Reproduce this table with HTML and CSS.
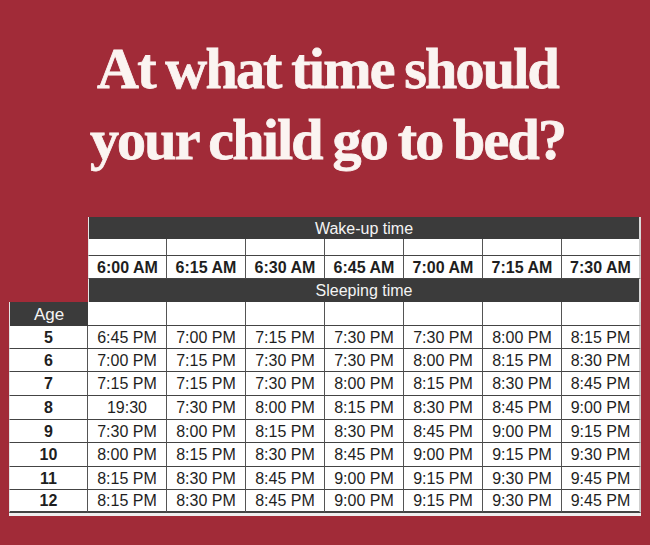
FILE: index.html
```html
<!DOCTYPE html>
<html lang="en">
<head>
<meta charset="utf-8">
<title>At what time should your child go to bed?</title>
<link rel="stylesheet" href="styles.css">
</head>
<body>
<div class="page">
  <h1 class="title">At what time should<br>your child go to bed?</h1>
  <div class="chart">
    <div class="void"></div>
    <div class="band first">Wake-up time</div>

    <div class="void"></div>
    <div class="cell first"></div><div class="cell"></div><div class="cell"></div><div class="cell"></div><div class="cell"></div><div class="cell"></div><div class="cell last"></div>

    <div class="void"></div>
    <div class="cell wake first">6:00 AM</div><div class="cell wake">6:15 AM</div><div class="cell wake">6:30 AM</div><div class="cell wake">6:45 AM</div><div class="cell wake">7:00 AM</div><div class="cell wake">7:15 AM</div><div class="cell wake last">7:30 AM</div>

    <div class="void"></div>
    <div class="band first">Sleeping time</div>

    <div class="agehead">Age</div>
    <div class="cell"></div><div class="cell"></div><div class="cell"></div><div class="cell"></div><div class="cell"></div><div class="cell"></div><div class="cell last"></div>

    <div class="age">5</div>
    <div class="cell">6:45 PM</div><div class="cell">7:00 PM</div><div class="cell">7:15 PM</div><div class="cell">7:30 PM</div><div class="cell">7:30 PM</div><div class="cell">8:00 PM</div><div class="cell last">8:15 PM</div>

    <div class="age">6</div>
    <div class="cell">7:00 PM</div><div class="cell">7:15 PM</div><div class="cell">7:30 PM</div><div class="cell">7:30 PM</div><div class="cell">8:00 PM</div><div class="cell">8:15 PM</div><div class="cell last">8:30 PM</div>

    <div class="age">7</div>
    <div class="cell">7:15 PM</div><div class="cell">7:15 PM</div><div class="cell">7:30 PM</div><div class="cell">8:00 PM</div><div class="cell">8:15 PM</div><div class="cell">8:30 PM</div><div class="cell last">8:45 PM</div>

    <div class="age">8</div>
    <div class="cell">19:30</div><div class="cell">7:30 PM</div><div class="cell">8:00 PM</div><div class="cell">8:15 PM</div><div class="cell">8:30 PM</div><div class="cell">8:45 PM</div><div class="cell last">9:00 PM</div>

    <div class="age">9</div>
    <div class="cell">7:30 PM</div><div class="cell">8:00 PM</div><div class="cell">8:15 PM</div><div class="cell">8:30 PM</div><div class="cell">8:45 PM</div><div class="cell">9:00 PM</div><div class="cell last">9:15 PM</div>

    <div class="age">10</div>
    <div class="cell">8:00 PM</div><div class="cell">8:15 PM</div><div class="cell">8:30 PM</div><div class="cell">8:45 PM</div><div class="cell">9:00 PM</div><div class="cell">9:15 PM</div><div class="cell last">9:30 PM</div>

    <div class="age">11</div>
    <div class="cell">8:15 PM</div><div class="cell">8:30 PM</div><div class="cell">8:45 PM</div><div class="cell">9:00 PM</div><div class="cell">9:15 PM</div><div class="cell">9:30 PM</div><div class="cell last">9:45 PM</div>

    <div class="age bottom">12</div>
    <div class="cell bottom">8:15 PM</div><div class="cell bottom">8:30 PM</div><div class="cell bottom">8:45 PM</div><div class="cell bottom">9:00 PM</div><div class="cell bottom">9:15 PM</div><div class="cell bottom">9:30 PM</div><div class="cell bottom last">9:45 PM</div>
  </div>
</div>
</body>
</html>
```

FILE: styles.css
```css
html, body {
  margin: 0;
  padding: 0;
  background: #a12b38;
}

.page {
  width: 650px;
  height: 545px;
  background: #a12b38;
  overflow: hidden;
}

.title {
  margin: 33px 0 0 0;
  padding-left: 5px;
  height: 184px;
  font-family: "Liberation Serif", "Times New Roman", serif;
  font-weight: 700;
  font-size: 58px;
  line-height: 71px;
  letter-spacing: -1.8px;
  word-spacing: -2px;
  color: #fbf4f1;
  -webkit-text-stroke: 0.8px #fbf4f1;
  text-align: center;
}

.chart {
  margin-left: 9px;
  display: grid;
  grid-template-columns: repeat(8, 79px);
  grid-template-rows: 22px 17px 23px 23px 24px 23px 23px 24px 24px 23px 24px 23px 23px;
  font-family: "Liberation Sans", Arial, sans-serif;
  font-size: 16px;
  color: #1e1e1e;
}

.void {
  background: transparent;
}

.band {
  grid-column: 2 / span 7;
  background: #3b3b3b;
  color: #f4f4f4;
  display: flex;
  align-items: center;
  justify-content: center;
  border-right: 2px solid #d9d9d9;
  box-sizing: border-box;
  padding-top: 1px;
}

.cell {
  background: #fff;
  box-sizing: border-box;
  border-right: 1px solid #555;
  border-bottom: 1px solid #444;
  display: flex;
  align-items: center;
  justify-content: center;
  white-space: nowrap;
  padding-top: 1px;
}

.cell.first,
.band.first {
  border-left: 1px solid #e6e6e6;
}

.cell.last {
  border-right: 2px solid #cfcfcf;
}

.wake {
  font-weight: 700;
}

.agehead {
  background: #3b3b3b;
  color: #f4f4f4;
  font-size: 17px;
  display: flex;
  align-items: center;
  justify-content: center;
  box-sizing: border-box;
  border-left: 1px solid #e6e6e6;
  padding-top: 1px;
}

.age {
  background: #fff;
  box-sizing: border-box;
  border-left: 1px solid #e6e6e6;
  border-right: 1px solid #555;
  border-bottom: 1px solid #444;
  font-weight: 700;
  display: flex;
  align-items: center;
  justify-content: center;
  padding-top: 1px;
}

.bottom {
  border-bottom: 2px solid #444;
  box-shadow: 0 3px 0 #f0eeee;
}
```
